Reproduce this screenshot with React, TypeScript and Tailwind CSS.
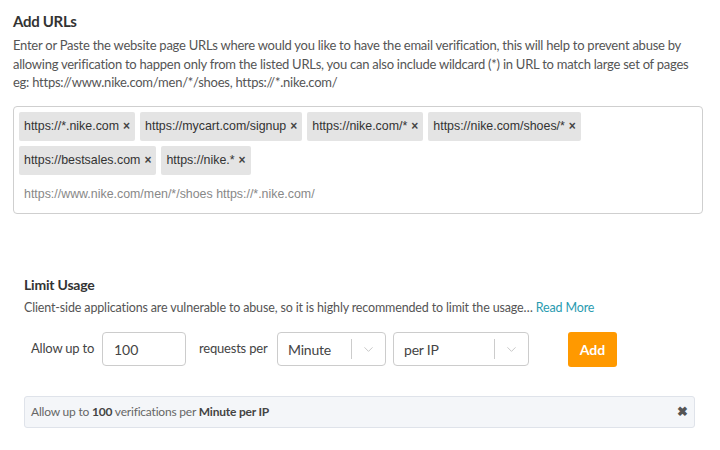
import { ChevronDown } from 'lucide-react';

const urls = [
    'https://*.nike.com',
    'https://mycart.com/signup',
    'https://nike.com/*',
    'https://nike.com/shoes/*',
    'https://bestsales.com',
    'https://nike.*'
];

function Select({ value, width }: { value: string; width: string }) {
    return (
        <div className={`flex items-center h-[34px] border border-[#cccccc] rounded-[4px] bg-white ${width}`}>
            <span className="flex-1 pl-[10px] text-[14px] tracking-[-0.2px] text-[#444]">{value}</span>
            <span className="w-px h-[20px] bg-[#cccccc]" />
            <span className="w-[33px] flex justify-center text-[#c4c4c4]">
                <ChevronDown className="w-[15px] h-[15px]" strokeWidth={1.5} />
            </span>
        </div>
    );
}

export default function App() {
    return (
        <div className="w-[720px] h-[450px] bg-white overflow-hidden font-['Lato','Open_Sans',sans-serif]">
            <div className="pt-[11px] px-[13px]">
                <h2 className="text-[15px] font-bold text-[#333] leading-[20px] tracking-[-0.3px]">Add URLs</h2>
                <p className="mt-[5px] text-[13px] tracking-[-0.25px] leading-[18.5px] text-[#555]">
                    Enter or Paste the website page URLs where would you like to have the email verification, this will help to prevent abuse by
                    allowing verification to happen only from the listed URLs, you can also include wildcard (*) in URL to match large set of pages
                    eg: https://www.nike.com/men/*/shoes, https://*.nike.com/
                </p>
                <div className="mt-[14px] w-[690px] h-[108px] border border-[#cfcfcf] rounded-[4px] p-[5px] font-['Liberation_Sans',Arial,sans-serif]">
                    <div className="flex flex-wrap gap-[5px] w-[600px]">
                        {urls.map((u) => (
                            <span
                                key={u}
                                className="flex items-center h-[29px] px-[5px] bg-[#e4e4e4] rounded-[2px] text-[12.4px] text-[#333]"
                            >
                                {u}
                                <span className="ml-[4px] text-[12px] font-bold text-[#444]">×</span>
                            </span>
                        ))}
                    </div>
                    <div className="mt-[10px] pl-[5px] text-[12.4px] text-[#888]">
                        https://www.nike.com/men/*/shoes https://*.nike.com/
                    </div>
                </div>
            </div>

            <div className="mt-[61px] px-[24px]">
                <h3 className="text-[14px] font-bold text-[#333] leading-[20px] tracking-[-0.2px]">Limit Usage</h3>
                <p className="mt-[4px] text-[12.5px] tracking-[-0.15px] leading-[18px] text-[#555]">
                    Client-side applications are vulnerable to abuse, so it is highly recommended to limit the usage…{' '}
                    <span className="text-[#2a9bb0]">Read More</span>
                </p>
                <div className="mt-[15px] flex items-center pl-[7px]">
                    <span className="w-[71px] text-[13px] tracking-[-0.2px] text-[#444]">Allow up to</span>
                    <div className="w-[84px] h-[34px] border border-[#cccccc] rounded-[4px] flex items-center pl-[11px] text-[14px] text-[#444]">
                        100
                    </div>
                    <span className="w-[91px] pl-[13px] text-[13px] tracking-[-0.2px] text-[#444]">requests per</span>
                    <Select value="Minute" width="w-[109px]" />
                    <div className="ml-[7px]">
                        <Select value="per IP" width="w-[136px]" />
                    </div>
                    <button className="ml-[39px] w-[49px] h-[35px] bg-[#ff9900] rounded-[3px] text-white font-bold text-[14px]">
                        Add
                    </button>
                </div>
                <div className="mt-[29px] w-[671px] h-[32px] bg-[#f4f6f9] border border-[#dfe3ea] rounded-[3px] flex items-center justify-between pl-[6px] pr-[6px] text-[12px] tracking-[-0.2px] text-[#666]">
                    <span>
                        Allow up to <b className="text-[#444]">100</b> verifications per <b className="text-[#444]">Minute per IP</b>
                    </span>
                    <span className="text-[13px] font-bold text-[#555]">✖</span>
                </div>
            </div>
        </div>
    );
}
